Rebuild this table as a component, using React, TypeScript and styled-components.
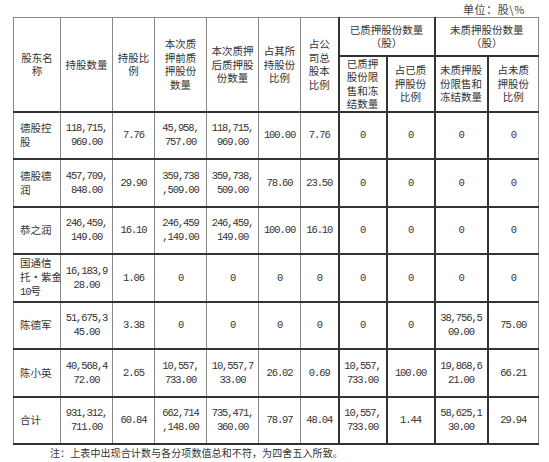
import React from 'react';
import styled, { createGlobalStyle } from 'styled-components';

const GlobalStyle = createGlobalStyle`
  html, body {
    margin: 0;
    padding: 0;
    background: #fff;
  }
  body {
    font-family: "Noto Sans CJK SC", "Liberation Sans", sans-serif;
    color: #333;
  }
`;

type Cell = string[];

interface Row {
  name: string[];
  cells: Cell[];
}

const COL_WIDTHS = [47, 52, 42, 52, 52, 42, 38, 48, 48, 53, 51];

const rows: Row[] = [
  {
    name: ['德股控', '股'],
    cells: [['118,715,', '969.00'], ['7.76'], ['45,958,', '757.00'], ['118,715,', '969.00'], ['100.00'], ['7.76'], ['0'], ['0'], ['0'], ['0']],
  },
  {
    name: ['德股德', '润'],
    cells: [['457,709,', '848.00'], ['29.90'], ['359,738', ',509.00'], ['359,738,', '509.00'], ['78.60'], ['23.50'], ['0'], ['0'], ['0'], ['0']],
  },
  {
    name: ['恭之润'],
    cells: [['246,459,', '149.00'], ['16.10'], ['246,459', ',149.00'], ['246,459,', '149.00'], ['100.00'], ['16.10'], ['0'], ['0'], ['0'], ['0']],
  },
  {
    name: ['国通信', '托•紫金', '10号'],
    cells: [['16,183,9', '28.00'], ['1.06'], ['0'], ['0'], ['0'], ['0'], ['0'], ['0'], ['0'], ['0']],
  },
  {
    name: ['陈德军'],
    cells: [['51,675,3', '45.00'], ['3.38'], ['0'], ['0'], ['0'], ['0'], ['0'], ['0'], ['38,756,5', '09.00'], ['75.00']],
  },
  {
    name: ['陈小英'],
    cells: [['40,568,4', '72.00'], ['2.65'], ['10,557,', '733.00'], ['10,557,7', '33.00'], ['26.02'], ['0.69'], ['10,557,', '733.00'], ['100.00'], ['19,868,6', '21.00'], ['66.21']],
  },
  {
    name: ['合计'],
    cells: [['931,312,', '711.00'], ['60.84'], ['662,714', ',148.00'], ['735,471,', '360.00'], ['78.97'], ['48.04'], ['10,557,', '733.00'], ['1.44'], ['58,625,1', '30.00'], ['29.94']],
  },
];

const mainHeads: string[][] = [
  ['股东名', '称'],
  ['持股数量'],
  ['持股比', '例'],
  ['本次质', '押前质', '押股份', '数量'],
  ['本次质押', '后质押股', '份数量'],
  ['占其所', '持股份', '比例'],
  ['占公', '司总', '股本', '比例'],
];

const subHeads: string[][] = [
  ['已质押', '股份限', '售和冻', '结数量'],
  ['占已质', '押股份', '比例'],
  ['未质押股', '份限售和', '冻结数量'],
  ['占未质', '押股份', '比例'],
];

const Lines: React.FC<{ lines: string[] }> = ({ lines }) => (
  <>
    {lines.map((l, i) => (
      <Line key={i}>{l}</Line>
    ))}
  </>
);

// digits are monospaced like the original song font
const NumLines: React.FC<{ lines: string[] }> = ({ lines }) => (
  <>
    {lines.map((l, i) => (
      <NumLine key={i}>{l}</NumLine>
    ))}
  </>
);

const App: React.FC = () => {
  return (
    <Page>
      <GlobalStyle />
      <Unit>单位：股\%</Unit>
      <Table>
        <colgroup>
          {COL_WIDTHS.map((w, i) => (
            <col key={i} style={{ width: w }} />
          ))}
        </colgroup>
        <thead>
          <HeadRowTop>
            {mainHeads.map((h, i) => (
              <HeadCell key={i} rowSpan={2}>
                <Lines lines={h} />
              </HeadCell>
            ))}
            <HeadCell colSpan={2} $strong>
              <Lines lines={['已质押股份数量', '（股）']} />
            </HeadCell>
            <HeadCell colSpan={2} $strong>
              <Lines lines={['未质押股份数量', '（股）']} />
            </HeadCell>
          </HeadRowTop>
          <HeadRowBottom>
            {subHeads.map((h, i) => (
              <HeadCell key={i} $strong>
                <Lines lines={h} />
              </HeadCell>
            ))}
          </HeadRowBottom>
        </thead>
        <tbody>
          {rows.map((r, ri) => (
            <BodyRow key={ri}>
              <NameCell>
                {r.name.map((n, i) => (
                  <Line key={i}>
                    {n.split(/(\d+)/).map((part, pi) =>
                      /\d/.test(part) ? <Digits key={pi}>{part}</Digits> : <React.Fragment key={pi}>{part}</React.Fragment>
                    )}
                  </Line>
                ))}
              </NameCell>
              {r.cells.map((c, ci) => (
                <DataCell key={ci} $strong={ci >= 6}>
                  <NumLines lines={c} />
                </DataCell>
              ))}
            </BodyRow>
          ))}
        </tbody>
      </Table>
      <Note>注：上表中出现合计数与各分项数值总和不符，为四舍五入所致。</Note>
    </Page>
  );
};

export default App;

const Page = styled.div`
  width: 549px;
  height: 462px;
  padding: 0 0 0 13px;
  box-sizing: border-box;
  display: flex;
  flex-direction: column;
`;

const Unit = styled.div`
  align-self: flex-end;
  margin: 2px 24px 0 0;
  height: 15px;
  font-size: 11px;
  line-height: 15px;
  letter-spacing: 0.6px;
  color: #444;
`;

const Table = styled.table`
  width: 525px;
  table-layout: fixed;
  border-collapse: collapse;
  border-top: 1px solid #888;
  border-bottom: 2px solid #444;
  border-left: 1px solid #777;
  border-right: 1px solid #999;
`;

const HeadRowTop = styled.tr`
  height: 38px;
`;

const HeadRowBottom = styled.tr`
  height: 53px;
`;

const BodyRow = styled.tr`
  height: 47.5px;
`;

const baseCell = `
  padding: 0 2px;
  vertical-align: middle;
  text-align: center;
  border-left: 1px solid #888;
  border-right: 1px solid #888;
  border-top: 2px solid #333;
  border-bottom: 2px solid #333;
  color: #333;
  overflow: hidden;
`;

const HeadCell = styled.th<{ $strong?: boolean }>`
  ${baseCell}
  font-weight: normal;
  font-size: 10.5px;
  line-height: 13.5px;
  ${(p) => (p.$strong ? 'border-left: 2px solid #333;' : '')}
  thead tr:first-child & {
    border-top: 1px solid #888;
  }
`;

const DataCell = styled.td<{ $strong?: boolean }>`
  ${baseCell}
  ${(p) => (p.$strong ? 'border-left: 2px solid #333;' : '')}
`;

const NameCell = styled.td`
  ${baseCell}
  text-align: left;
  padding-left: 6px;
  font-size: 10.5px;
  line-height: 14px;
`;

const Line = styled.div`
  white-space: nowrap;
`;

const NumLine = styled.div`
  white-space: nowrap;
  font-family: "Liberation Mono", "Noto Sans CJK SC", monospace;
  font-size: 10.5px;
  letter-spacing: -1.1px;
  line-height: 14px;
  color: #333;
`;

const Digits = styled.span`
  font-family: "Liberation Mono", monospace;
  letter-spacing: -1.1px;
`;

const Note = styled.div`
  margin: 1px 0 0 37px;
  font-size: 10px;
  line-height: 13px;
  letter-spacing: 0.1px;
  color: #333;
`;
